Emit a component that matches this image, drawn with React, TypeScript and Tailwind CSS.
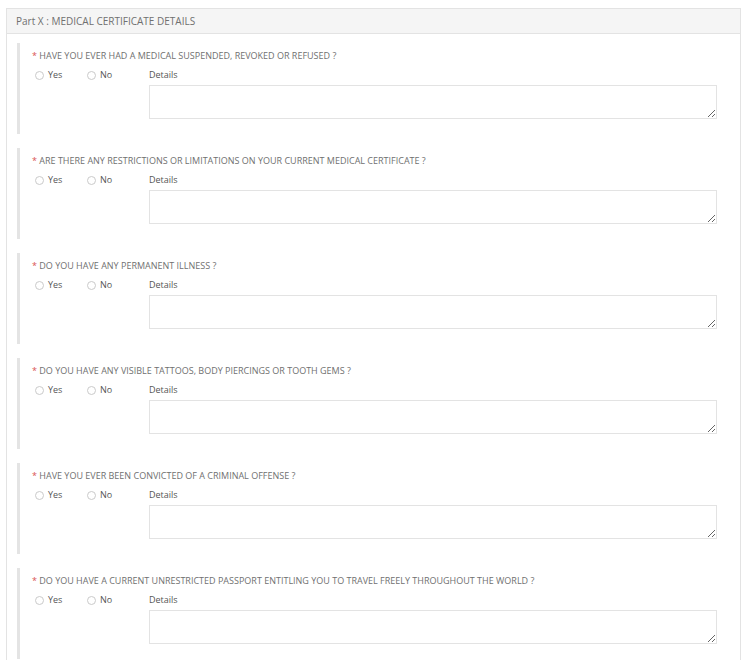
import React from "react";

const questions = [
  "HAVE YOU EVER HAD A MEDICAL SUSPENDED, REVOKED OR REFUSED ?",
  "ARE THERE ANY RESTRICTIONS OR LIMITATIONS ON YOUR CURRENT MEDICAL CERTIFICATE ?",
  "DO YOU HAVE ANY PERMANENT ILLNESS ?",
  "DO YOU HAVE ANY VISIBLE TATTOOS, BODY PIERCINGS OR TOOTH GEMS ?",
  "HAVE YOU EVER BEEN CONVICTED OF A CRIMINAL OFFENSE ?",
  "DO YOU HAVE A CURRENT UNRESTRICTED PASSPORT ENTITLING YOU TO TRAVEL FREELY THROUGHOUT THE WORLD ?",
];

function Radio({ label }: { label: string }) {
  return (
    <label className="flex items-center w-[52px] h-[12px]">
      <span className="w-[9px] h-[9px] rounded-full border border-[#cacaca] bg-white box-border" />
      <span className="ml-[4px] text-[9px] leading-[12px] text-[#555]">{label}</span>
    </label>
  );
}

function Question({ text }: { text: string }) {
  return (
    <div className="border-l-[3px] border-[#e4e4e4] pl-[12px] pt-[7px] pb-[15px] mb-[14px]">
      <div className="text-[9px] leading-[12px] text-[#707070] whitespace-nowrap">
        <span className="text-[#d9534f]">*</span> {text}
      </div>
      <div className="flex mt-[7px]">
        <div className="w-[117px] flex pl-[3px] items-start">
          <Radio label="Yes" />
          <Radio label="No" />
        </div>
        <div className="flex-1 flex flex-col">
          <div className="text-[9px] leading-[12px] text-[#555]">Details</div>
          <textarea className="mt-[4px] h-[34px] w-[568px] border border-[#e3e3e3] bg-white block outline-none" />
        </div>
      </div>
    </div>
  );
}

export default function App() {
  return (
    <div
      className="w-[752px] h-[660px] overflow-hidden bg-white pt-[8px] pl-[6px] pr-[11px]"
      style={{ fontFamily: '"Open Sans", "Noto Sans", sans-serif' }}
    >
      <div className="border border-[#e3e3e3] h-[700px]">
        <div className="h-[25px] bg-[#f5f5f5] border-b border-[#e3e3e3] px-[9px] flex items-center text-[10px] text-[#707070]">
          Part X : MEDICAL CERTIFICATE DETAILS
        </div>
        <div className="pl-[10px] pt-[9px]">
          {questions.map((q) => (
            <Question key={q} text={q} />
          ))}
        </div>
      </div>
    </div>
  );
}
